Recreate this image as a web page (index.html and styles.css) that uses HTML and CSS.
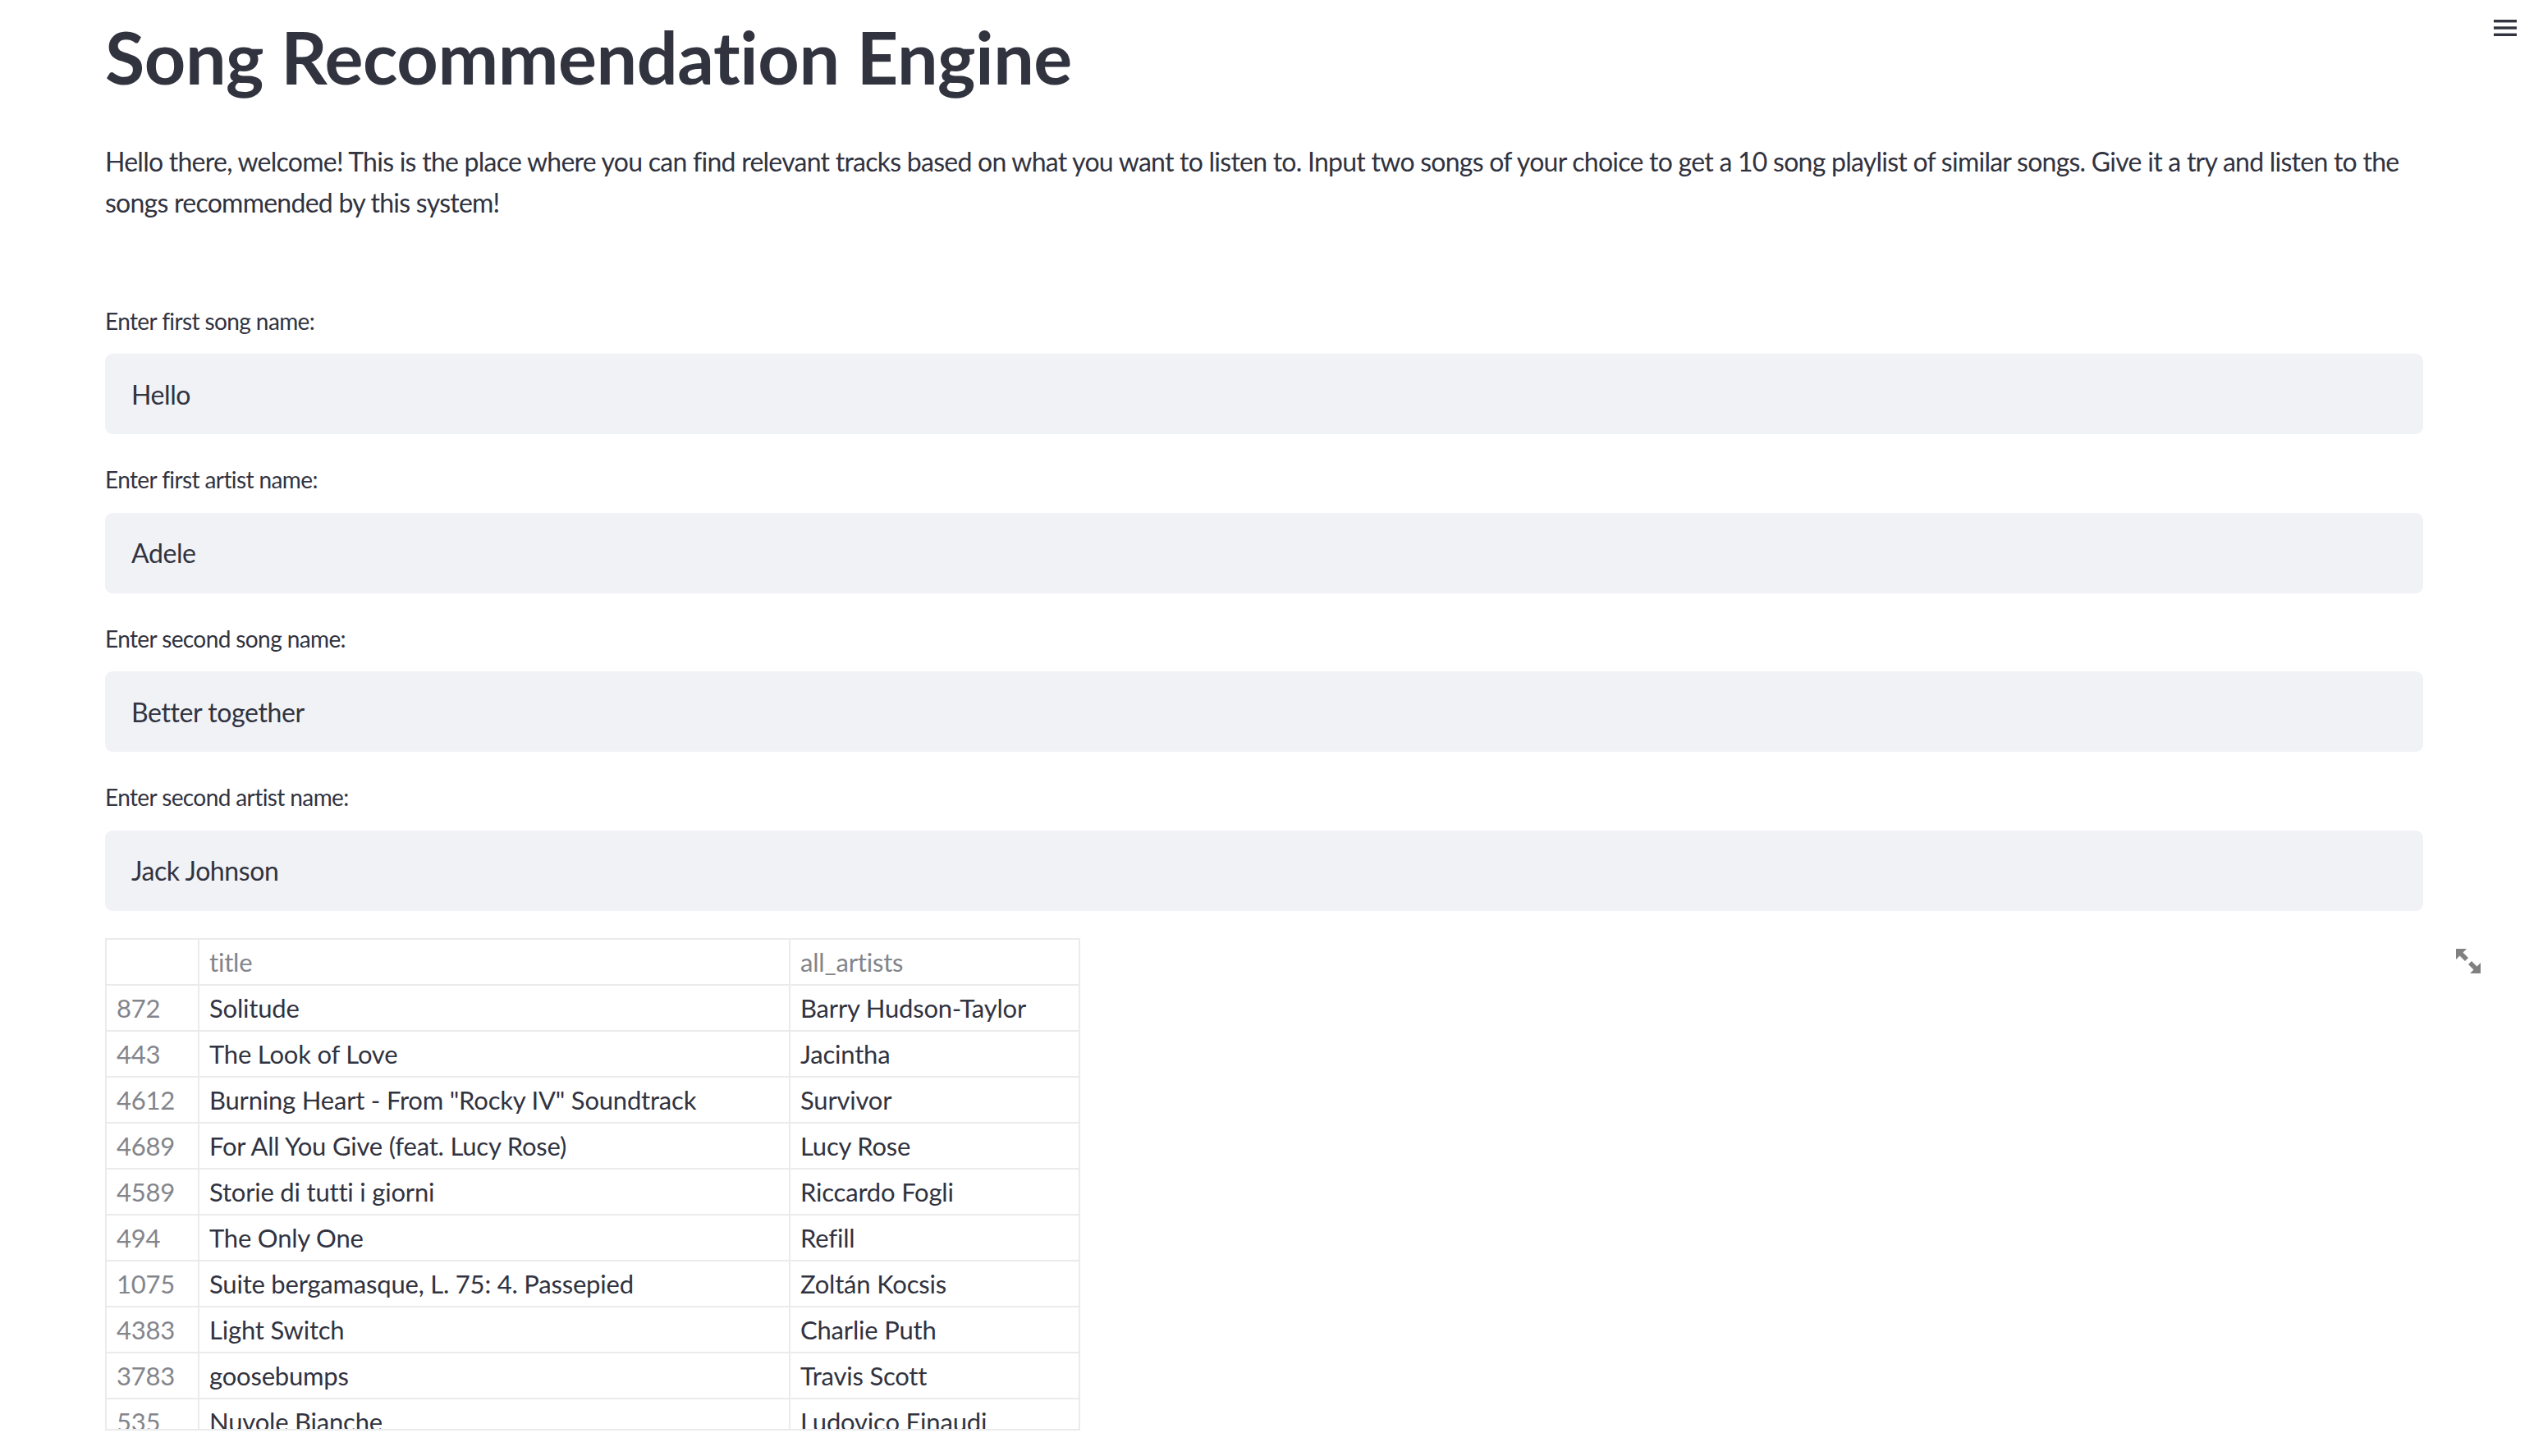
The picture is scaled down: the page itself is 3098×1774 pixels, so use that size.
FILE: index.html
```html
<!DOCTYPE html>
<html lang="en">
<head>
<meta charset="utf-8">
<title>Song Recommendation Engine</title>
<link rel="stylesheet" href="styles.css">
</head>
<body>
<header class="toolbar">
  <button class="menu-btn" aria-label="Main menu">
    <svg width="28" height="24" viewBox="0 0 28 24"><rect x="0" y="2" width="28" height="3.4" fill="#31333F"/><rect x="0" y="10.3" width="28" height="3.4" fill="#31333F"/><rect x="0" y="18.6" width="28" height="3.4" fill="#31333F"/></svg>
  </button>
</header>
<main class="main">
  <h1 class="title">Song Recommendation Engine</h1>
  <p class="intro">Hello there, welcome! This is the place where you can find relevant tracks based on what you want to listen to. Input two songs of your choice to get a 10 song playlist of similar songs. Give it a try and listen to the songs recommended by this system!</p>

  <div class="widgets">
    <div class="field">
      <label class="field-label">Enter first song name:</label>
      <div class="input">Hello</div>
    </div>
    <div class="field">
      <label class="field-label">Enter first artist name:</label>
      <div class="input">Adele</div>
    </div>
    <div class="field">
      <label class="field-label">Enter second song name:</label>
      <div class="input">Better together</div>
    </div>
    <div class="field">
      <label class="field-label">Enter second artist name:</label>
      <div class="input">Jack Johnson</div>
    </div>

    <div class="frame">
      <div class="table-wrap">
        <table class="df">
          <thead>
            <tr><th class="idx"></th><th class="c-title">title</th><th class="c-artist">all_artists</th></tr>
          </thead>
          <tbody>
            <tr><td class="idx">872</td><td>Solitude</td><td>Barry Hudson-Taylor</td></tr>
            <tr><td class="idx">443</td><td>The Look of Love</td><td>Jacintha</td></tr>
            <tr><td class="idx">4612</td><td>Burning Heart - From "Rocky IV" Soundtrack</td><td>Survivor</td></tr>
            <tr><td class="idx">4689</td><td>For All You Give (feat. Lucy Rose)</td><td>Lucy Rose</td></tr>
            <tr><td class="idx">4589</td><td>Storie di tutti i giorni</td><td>Riccardo Fogli</td></tr>
            <tr><td class="idx">494</td><td>The Only One</td><td>Refill</td></tr>
            <tr><td class="idx">1075</td><td>Suite bergamasque, L. 75: 4. Passepied</td><td>Zoltán Kocsis</td></tr>
            <tr><td class="idx">4383</td><td>Light Switch</td><td>Charlie Puth</td></tr>
            <tr><td class="idx">3783</td><td>goosebumps</td><td>Travis Scott</td></tr>
            <tr><td class="idx">535</td><td>Nuvole Bianche</td><td>Ludovico Einaudi</td></tr>
          </tbody>
        </table>
      </div>
      <button class="fullscreen" aria-label="View fullscreen">
        <svg width="30" height="30" viewBox="0 0 30 30"><polygon points="0,0 13,0 8.5,4.5 15,11 11,15 4.5,8.5 0,13" fill="#808080"/><polygon points="30,30 17,30 21.5,25.5 15,19 19,15 25.5,21.5 30,17" fill="#808080"/></svg>
      </button>
    </div>
  </div>
</main>
</body>
</html>
```

FILE: styles.css
```css
html, body {
  margin: 0;
  padding: 0;
  background: #ffffff;
}

body {
  font-family: "Lato", "Noto Sans", sans-serif;
  color: #31333F;
}

.toolbar {
  position: absolute;
  top: 0;
  right: 0;
  padding: 22px 32px 0 0;
}

.menu-btn {
  border: 0;
  background: transparent;
  padding: 0;
  display: block;
  cursor: pointer;
}

.menu-btn svg {
  display: block;
}

.main {
  padding: 0 146px 0 128px;
}

.title {
  margin: 0;
  padding: 14px 0 0 0;
  font-size: 88px;
  font-weight: 700;
  line-height: 110px;
  letter-spacing: -0.4px;
  color: #31333F;
}

.intro {
  margin: 48px 0 0 0;
  font-size: 32px;
  line-height: 49.5px;
  letter-spacing: -0.75px;
}

.widgets {
  display: flex;
  flex-direction: column;
  gap: 33px;
  margin-top: 98px;
}

.field {
  display: flex;
  flex-direction: column;
}

.field-label {
  font-size: 28px;
  line-height: 44.4px;
  margin-bottom: 18px;
  letter-spacing: -0.6px;
}

.input {
  height: 98px;
  box-sizing: border-box;
  background: #F0F2F6;
  border-radius: 9px;
  padding: 0 32px;
  display: flex;
  align-items: center;
  font-size: 32px;
  letter-spacing: -0.4px;
}

.frame {
  position: relative;
}

.table-wrap {
  width: 1188px;
  height: 600px;
  overflow: hidden;
  box-sizing: border-box;
  border: 2px solid #EAEBEC;
}

.df {
  border-collapse: collapse;
  width: 1188px;
  margin: -2px 0 0 -2px;
  font-size: 31px;
  letter-spacing: -0.2px;
}

.df th,
.df td {
  border: 2px solid #EAEBEC;
  height: 56px;
  padding: 0 12px;
  text-align: left;
  font-weight: 400;
  white-space: nowrap;
  color: #31333F;
  box-sizing: border-box;
}

.df th {
  color: #83858C;
}

.df .idx {
  width: 113px;
  color: #83858C;
}

.df .c-title {
  width: 720px;
}

.fullscreen {
  position: absolute;
  top: 13px;
  right: -70px;
  border: 0;
  background: transparent;
  padding: 0;
}

.fullscreen svg {
  display: block;
}
```
